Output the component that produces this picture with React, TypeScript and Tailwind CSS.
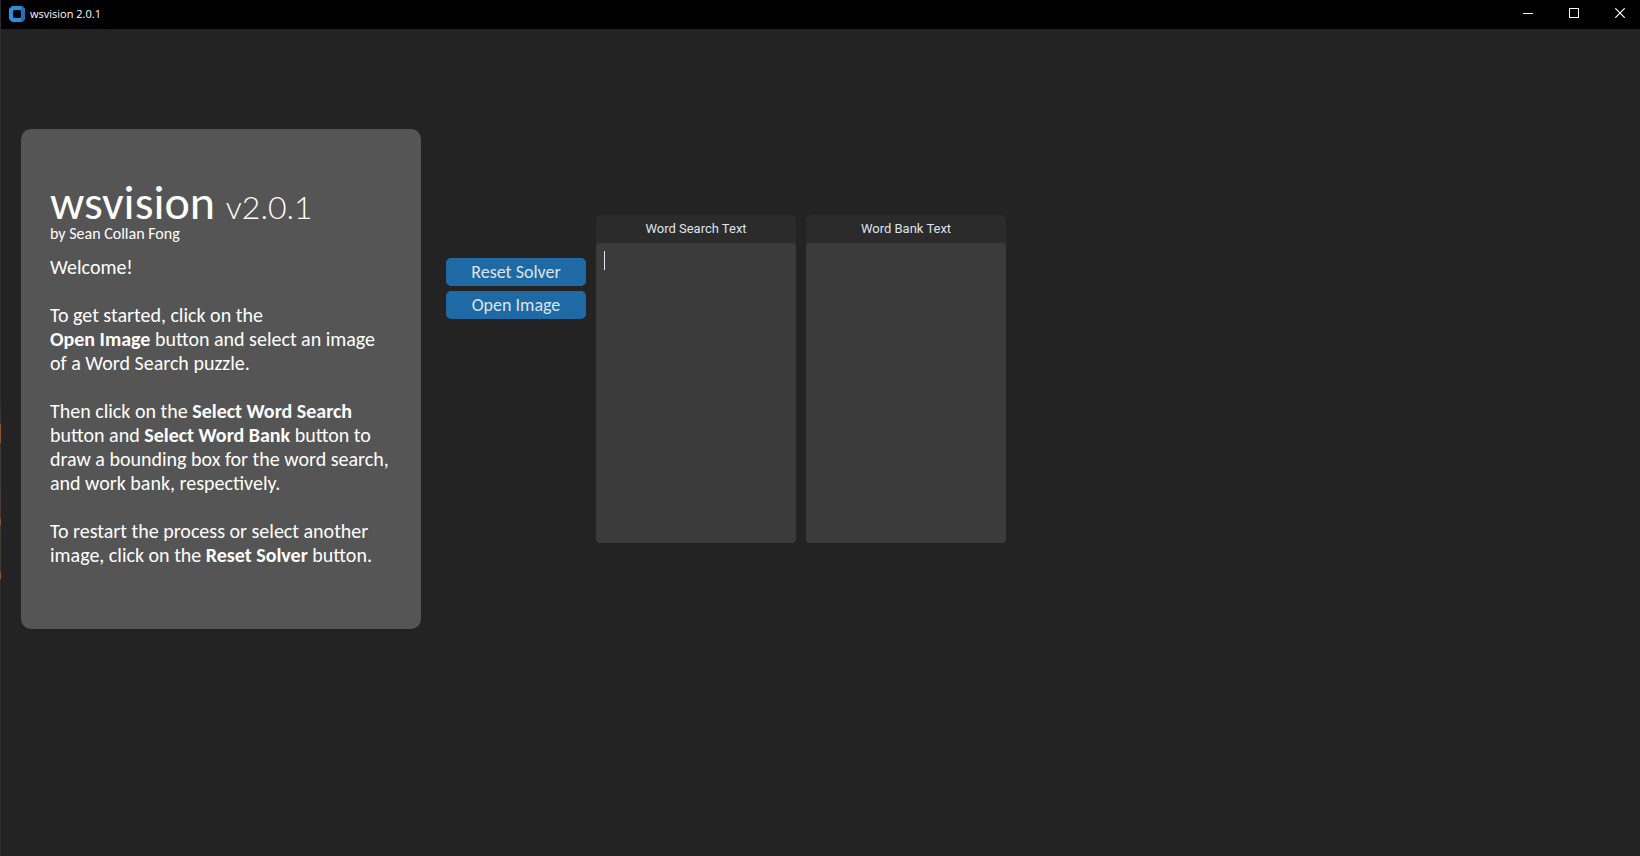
import type { ReactNode } from "react";

function TitleBar() {
  return (
    <header className="flex h-[29px] shrink-0 items-start bg-black text-white">
      <div className="flex h-[28px] grow items-center gap-[5px] pl-[8px]">
        <svg className="size-4" viewBox="0 0 16 16" aria-hidden="true">
          <path d="M3 0h10l3 3v10l-3 3H3l-3-3V3z" fill="#2b8fdc" />
          <path d="M13 0l3 3v10l-3 3h-1V0z" fill="#2470b3" />
          <path d="M5 4h6l1 1v6l-1 1H5l-1-1V5z" fill="#000" />
        </svg>
        <h1 className="font-['Open_Sans',sans-serif] text-[11px] leading-[16px]">wsvision 2.0.1</h1>
      </div>
      <div className="flex h-[26px] gap-[6px]">
        <button type="button" aria-label="Minimize" className="flex w-10 items-center justify-center">
          <svg className="size-[10px]" viewBox="0 0 10 10" shapeRendering="crispEdges">
            <path d="M0 5.5h10" stroke="#fff" />
          </svg>
        </button>
        <button type="button" aria-label="Maximize" className="flex w-10 items-center justify-center">
          <svg className="size-[10px]" viewBox="0 0 10 10" shapeRendering="crispEdges">
            <rect x="0.5" y="0.5" width="9" height="9" fill="none" stroke="#fff" />
          </svg>
        </button>
        <button type="button" aria-label="Close" className="flex w-10 items-center justify-center">
          <svg className="size-[10px]" viewBox="0 0 10 10">
            <path d="M0.3 0.3l9.4 9.4M9.7 0.3l-9.4 9.4" stroke="#fff" strokeWidth="1.2" />
          </svg>
        </button>
      </div>
    </header>
  );
}

function WelcomeCard() {
  return (
    <section className="flex h-[500px] w-[400px] shrink-0 flex-col rounded-[10px] bg-[#555555] px-[29px] pt-[55px] font-[Carlito,Lato,sans-serif] text-[20px] leading-[24px] text-white">
      <h2 className="whitespace-nowrap text-[48px] leading-[38px]">
        wsvision <span className="font-[Lato,sans-serif] text-[32px] font-light">v2.0.1</span>
      </h2>
      <p className="text-[16px] leading-[16px]">by Sean Collan Fong</p>
      <div className="mt-[13px] flex flex-col gap-[24px] whitespace-nowrap">
        <p>Welcome!</p>
        <p>
          To get started, click on the
          <br />
          <b>Open Image</b> button and select an image
          <br />
          of a Word Search puzzle.
        </p>
        <p>
          Then click on the <b>Select Word Search</b>
          <br />
          button and <b>Select Word Bank</b> button to
          <br />
          draw a bounding box for the word search,
          <br />
          and work bank, respectively.
        </p>
        <p>
          To restart the process or select another
          <br />
          image, click on the <b>Reset Solver</b> button.
        </p>
      </div>
    </section>
  );
}

function ActionButton({ children }: { children: ReactNode }) {
  return (
    <button
      type="button"
      className="h-[28px] w-[140px] rounded-[5px] bg-[#1f6aa5] font-[Carlito,Lato,sans-serif] text-[18px] leading-[24px] text-[#dce4ee]"
    >
      {children}
    </button>
  );
}

function TextPanel({ id, label, caret = false }: { id: string; label: string; caret?: boolean }) {
  return (
    <div className="relative flex w-[200px] flex-col rounded-[5px] bg-[#2b2b2b]">
      <label
        htmlFor={id}
        className="h-[28px] text-center font-[Roboto,sans-serif] text-[13px] leading-[28px] text-[#dce4ee]"
      >
        {label}
      </label>
      <textarea
        id={id}
        className="block h-[300px] resize-none rounded-[4px] bg-[#3b3b3b] px-[8px] py-[8px] font-[Roboto,sans-serif] text-[13px] text-[#dce4ee] outline-none"
      />
      {caret && <span className="pointer-events-none absolute left-[8px] top-[36px] h-[19px] w-px bg-[#dce4ee]" />}
    </div>
  );
}

export default function App() {
  return (
    <div className="flex min-h-screen bg-[#232323]">
      <div className="w-px shrink-0 bg-[linear-gradient(#2c2c2c_400px,#3a3a3a_424px,#8a5530_424px,#8a5530_443px,#3a3a3a_443px,#4a3a34_500px,#4a3a34_519px,#8a5530_519px,#8a5530_525px,#4a3a34_525px,#3a3a3a_572px,#8a5530_572px,#8a5530_579px,#2c2c2c_579px)]" />
      <div className="flex min-w-0 grow flex-col">
        <TitleBar />
        <main className="flex items-center gap-[25px] px-[20px] pt-[100px]">
          <WelcomeCard />
          <div className="flex items-start gap-[10px]">
            <div className="flex flex-col gap-[5px] pt-[43px]">
              <ActionButton>Reset Solver</ActionButton>
              <ActionButton>Open Image</ActionButton>
            </div>
            <TextPanel id="word-search" label="Word Search Text" caret />
            <TextPanel id="word-bank" label="Word Bank Text" />
          </div>
        </main>
      </div>
    </div>
  );
}
